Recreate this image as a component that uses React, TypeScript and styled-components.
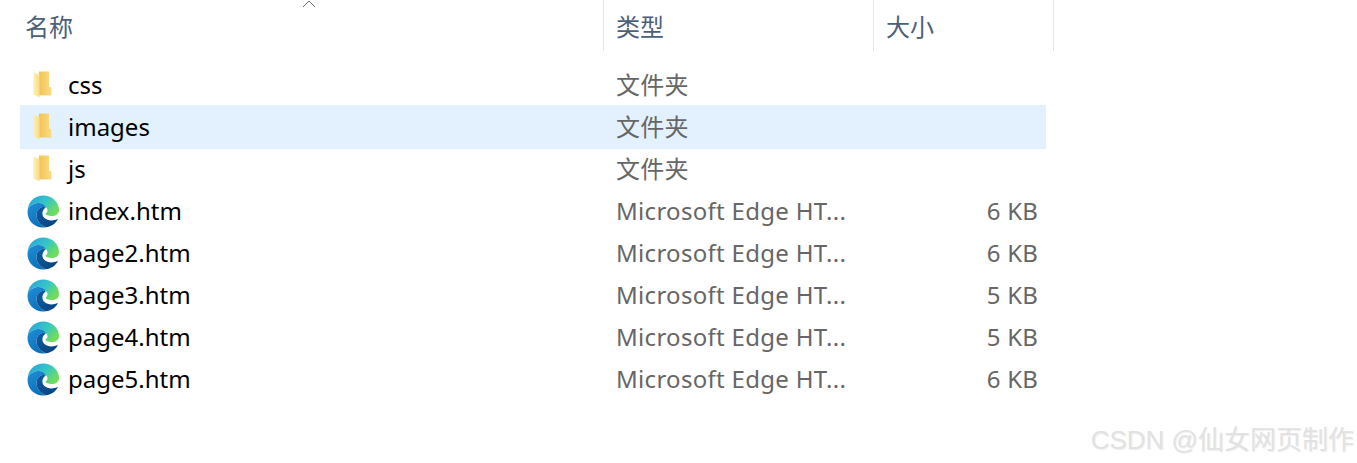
import styled, {createGlobalStyle} from "styled-components"

const GlobalStyle = createGlobalStyle`
    html, body {
        margin: 0;
        padding: 0;
        background: #fff;
    }
    body {
        font-family: "Noto Sans", "Noto Sans CJK SC", sans-serif;
    }
`

const Page = styled.div`
    position: relative;
    width: 1357px;
    height: 463px;
    overflow: hidden;
    background: #fff;
`

const Header = styled.div`
    display: flex;
    height: 51px;
    margin-left: 20px;
    width: 1034px;
`

const HeaderCell = styled.div<{$width: number}>`
    position: relative;
    box-sizing: border-box;
    width: ${p => p.$width}px;
    padding: 0 0 0 ${p => (p.$width > 500 ? 5 : 12)}px;
    height: 51px;
    line-height: 52px;
    font-size: 24px;
    color: #4c607a;
    border-right: 1px solid #e5e5e5;
    font-family: "Noto Sans CJK SC", sans-serif;
`

const SortCaret = styled.svg`
    position: absolute;
    left: 282px;
    top: 0;
`

const List = styled.div`
    margin-top: 13px;
    margin-left: 20px;
    width: 1026px;
`

const Row = styled.div<{$selected?: boolean}>`
    display: flex;
    align-items: center;
    height: 42px;
    background: ${p => (p.$selected ? "#e2f1fd" : "transparent")};
    box-shadow: ${p => (p.$selected ? "0 1px 0 #e2f1fd, 0 -1px 0 #e2f1fd" : "none")};
`

const NameCell = styled.div`
    display: flex;
    align-items: center;
    width: 584px;
`

const IconBox = styled.div`
    width: 48px;
    display: flex;
    justify-content: center;
    padding-right: 2px;
    box-sizing: border-box;
`

const FileName = styled.span`
    font-size: 24px;
    line-height: 32px;
    color: #000;
`

const TypeCell = styled.div`
    width: 270px;
    padding-left: 12px;
    box-sizing: border-box;
    font-size: 24px;
    line-height: 32px;
    letter-spacing: 0.3px;
    color: #666;
    white-space: nowrap;
`

const SizeCell = styled.div`
    width: 164px;
    text-align: right;
    font-size: 24px;
    line-height: 32px;
    letter-spacing: 0.2px;
    color: #666;
`

const Watermark = styled.div`
    position: absolute;
    right: 3px;
    top: 424px;
    font-family: "Liberation Sans", "Noto Sans CJK SC", sans-serif;
    font-size: 26px;
    line-height: 32px;
    color: #e2e2e2;
    text-shadow: 1px 1px 1px rgba(140, 140, 140, 0.15);
    white-space: nowrap;
`

const FolderIcon = () => (
    <svg width="20" height="28" viewBox="0 0 20 28">
        <defs>
            <linearGradient id="fback" x1="0" y1="0" x2="1" y2="0">
                <stop offset="0" stopColor="#f2c14f" />
                <stop offset="1" stopColor="#fbdc84" />
            </linearGradient>
            <linearGradient id="fflap" x1="0" y1="0" x2="1" y2="0">
                <stop offset="0" stopColor="#fdeeb6" />
                <stop offset="1" stopColor="#f9dc8c" />
            </linearGradient>
        </defs>
        <path d="M6 0.5H16V15.5L18.5 16.5V24H5Z" fill="url(#fback)" />
        <path d="M0.5 1.5L6.5 4V26.5L0.5 23.5Z" fill="url(#fflap)" />
        <path d="M6.5 24H18.5V24.6H6.5Z" fill="#e9b94a" opacity="0.5" />
    </svg>
)

const EdgeIcon = ({id}: {id: string}) => (
    <svg width="33" height="33" viewBox="0 0 33 33">
        <defs>
            <linearGradient id={`${id}a`} x1="0.1" y1="0.1" x2="0.95" y2="0.6">
                <stop offset="0" stopColor="#2aa6dc" />
                <stop offset="0.55" stopColor="#35c7c4" />
                <stop offset="1" stopColor="#6fdc5c" />
            </linearGradient>
            <linearGradient id={`${id}b`} x1="0" y1="0" x2="0.6" y2="1">
                <stop offset="0" stopColor="#1e8fd6" />
                <stop offset="1" stopColor="#0c6fb8" />
            </linearGradient>
            <linearGradient id={`${id}c`} x1="0" y1="0" x2="1" y2="1">
                <stop offset="0" stopColor="#0e5da5" />
                <stop offset="1" stopColor="#0a3f7c" />
            </linearGradient>
        </defs>
        <path d="M0.8 14C2 6 8 0.5 16.5 0.5C25 0.5 32 7 32 15C32 19 28.5 21 25 21C21.5 21 18.5 20 18.5 18.5C20.5 17.5 21 15.5 20 13.5C18 10 15 8 11.5 8C7 8 3 10.5 0.8 14Z" fill={`url(#${id}a)`} />
        <path d="M0.8 14C3 10.5 7 8 11.5 8C15 8 18 10 19 12C14 11 10 14 9.5 19C9 25 13 30 19 32.2C17.8 32.5 17 32.5 16 32.5C7 32.5 0.5 25.5 0.5 17Z" fill={`url(#${id}b)`} />
        <path d="M19 12C14 11 10 14 9.5 19C9 25 13 30 19 32.2C23.5 31.7 28 29.5 31 24C26.5 26 20.5 26 17.5 23C14.5 20.5 14.5 15.5 19 12Z" fill={`url(#${id}c)`} />
    </svg>
)

const rows = [
    {name: "css", type: "文件夹", folder: true},
    {name: "images", type: "文件夹", folder: true, selected: true},
    {name: "js", type: "文件夹", folder: true},
    {name: "index.htm", type: "Microsoft Edge HT...", size: "6 KB"},
    {name: "page2.htm", type: "Microsoft Edge HT...", size: "6 KB"},
    {name: "page3.htm", type: "Microsoft Edge HT...", size: "5 KB"},
    {name: "page4.htm", type: "Microsoft Edge HT...", size: "5 KB"},
    {name: "page5.htm", type: "Microsoft Edge HT...", size: "6 KB"},
]

export default function App() {
    return (
        <Page>
            <GlobalStyle />
            <Header>
                <HeaderCell $width={584}>
                    名称
                    <SortCaret width="14" height="8" viewBox="0 0 14 8">
                        <path d="M1 7L7 1L13 7" fill="none" stroke="#6d6d6d" strokeWidth="1" />
                    </SortCaret>
                </HeaderCell>
                <HeaderCell $width={270}>类型</HeaderCell>
                <HeaderCell $width={180}>大小</HeaderCell>
            </Header>
            <List>
                {rows.map(row => (
                    <Row key={row.name} $selected={row.selected}>
                        <NameCell>
                            <IconBox>
                                {row.folder ? <FolderIcon /> : <EdgeIcon id={row.name.replace(".", "")} />}
                            </IconBox>
                            <FileName>{row.name}</FileName>
                        </NameCell>
                        <TypeCell>{row.type}</TypeCell>
                        <SizeCell>{row.size}</SizeCell>
                    </Row>
                ))}
            </List>
            <Watermark>CSDN @仙女网页制作</Watermark>
        </Page>
    )
}
